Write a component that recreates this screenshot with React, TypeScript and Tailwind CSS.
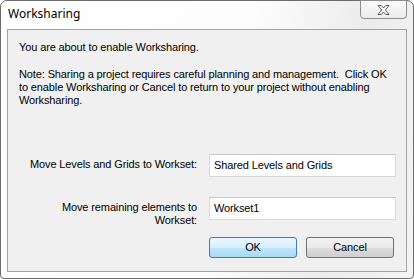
export default function App() {
  return (
    <div className="w-[414px] h-[279px] bg-white">
      <div className="flex h-full w-full flex-col rounded-t-[7px] rounded-b-[4px] border border-[#6b6b6b] bg-[linear-gradient(100deg,#ffffff_0%,#fdfdfd_55%,#ececec_80%,#f4f4f4_100%)]">
        {/* title bar */}
        <div className="relative h-[28px] shrink-0">
          <span className="absolute left-[7px] top-[5px] font-['Noto_Sans',sans-serif] text-[12px] leading-[16px] text-black">
            Worksharing
          </span>
          <button className="absolute right-[6px] top-[-1px] flex h-[19px] w-[47px] items-center justify-center rounded-b-[4px] border border-[#8d8d8d] bg-[linear-gradient(#fbfbfb,#ececec)]">
            <svg width="13" height="10" viewBox="0 0 13 10">
              <path
                d="M1 0.5H4.2L6.5 3L8.8 0.5H12L8.3 5L12 9.5H8.8L6.5 7L4.2 9.5H1L4.7 5Z"
                fill="#ffffff"
                stroke="#505866"
                strokeWidth="1"
                strokeLinejoin="round"
              />
            </svg>
          </button>
        </div>

        {/* client area */}
        <div className="mx-[6px] mb-[6px] flex-1 border border-[#a2a2a2] bg-[#f0f0f0] pl-[11px] pt-[11px] font-['Liberation_Sans',Arial,sans-serif] text-[11px] leading-[13px] tracking-[-0.12px] text-black">
          <p>You are about to enable Worksharing.</p>
          <p className="mt-[14px] w-[386px]">
            Note: Sharing a project requires careful planning and management.&nbsp; Click OK
            <br />
            to enable Worksharing or Cancel to return to your project without enabling
            <br />
            Worksharing.
          </p>

          <div className="mt-[47px] flex items-start gap-[12px]">
            <label className="w-[178px] pt-[4px] text-right">Move Levels and Grids to Workset:</label>
            <div className="h-[23px] w-[187px] border border-[#d7d9dc] border-t-[#c6c9cd] bg-white pl-[4px] pt-[4px]">
              Shared Levels and Grids
            </div>
          </div>

          <div className="mt-[20px] flex items-start gap-[12px]">
            <label className="w-[178px] pt-[4px] text-right">
              Move remaining elements to
              <br />
              Workset:
            </label>
            <div className="h-[23px] w-[187px] border border-[#d7d9dc] border-t-[#c6c9cd] bg-white pl-[4px] pt-[4px]">
              Workset1
            </div>
          </div>

          <div className="mt-[10px] flex gap-[9px] pl-[190px]">
            <button className="h-[21px] w-[88px] rounded-[3px] border border-[#3c7fb1] bg-[linear-gradient(#eaf6fd_0%,#d9f0fc_50%,#bee6fd_51%,#a7d9f5_100%)] text-[11px] leading-[19px]">
              OK
            </button>
            <button className="h-[21px] w-[88px] rounded-[3px] border border-[#707070] bg-[linear-gradient(#f2f2f2_0%,#ebebeb_50%,#dddddd_51%,#cfcfcf_100%)] text-[11px] leading-[19px]">
              Cancel
            </button>
          </div>
        </div>
      </div>
    </div>
  );
}
